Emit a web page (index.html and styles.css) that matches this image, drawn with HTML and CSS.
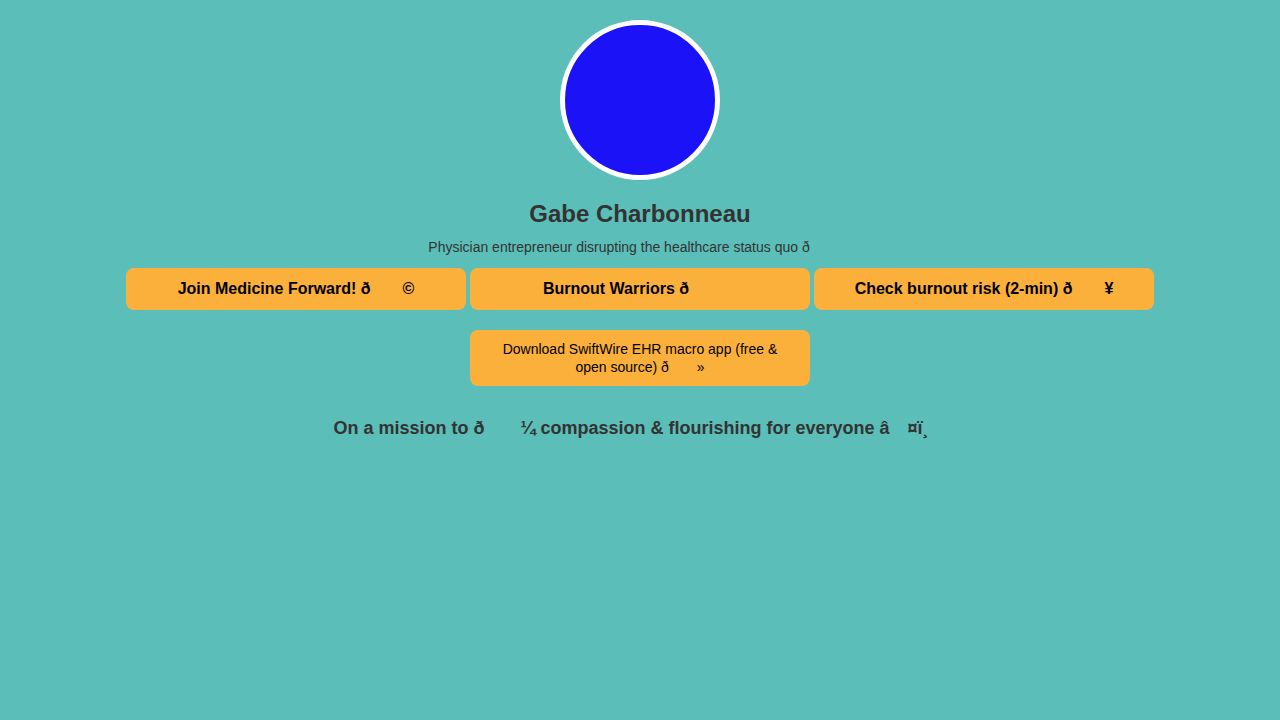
FILE: index.html
```html
<!DOCTYPE html>
<html lang="en">
<head>
<meta charset="utf-8">
<title>Gabe Charbonneau</title>
<link rel="stylesheet" href="styles.css">
</head>
<body>
<main class="page">
  <div class="avatar"></div>
  <h1 class="name">Gabe Charbonneau</h1>
  <p class="bio">Physician entrepreneur disrupting the healthcare status quo ð<span class="cc cc3"></span></p>
  <nav class="links">
    <a class="link link-bold" href="#">Join Medicine Forward! ð<span class="cc cc2"></span>©</a>
    <a class="link link-bold" href="#">Burnout Warriors ð<span class="cc cc3"></span></a>
    <a class="link link-bold" href="#">Check burnout risk (2-min) ð<span class="cc cc2"></span>¥</a>
    <a class="link link-plain" href="#">Download SwiftWire EHR macro app (free &amp; open source) ð<span class="cc cc2"></span>»</a>
  </nav>
  <h2 class="mission">On a mission to ð<span class="cc cc2"></span>¼ compassion &amp; flourishing for everyone â<span class="cc cc1"></span>¤ï¸<span class="cc cc1"></span></h2>
</main>
</body>
</html>
```

FILE: styles.css
```css
html, body {
  margin: 0;
  padding: 0;
}

body {
  background: #5bbeb8;
  font-family: "Liberation Sans", Arial, Helvetica, sans-serif;
  color: #333333;
}

.page {
  display: flex;
  flex-direction: column;
  align-items: center;
  padding-top: 20px;
}

.avatar {
  width: 150px;
  height: 150px;
  border-radius: 50%;
  border: 5px solid #ffffff;
  background: #1c12f8;
}

.name {
  margin: 20px 0 0;
  font-size: 24px;
  font-weight: bold;
  line-height: 28px;
}

.bio {
  margin: 11px 0 0;
  font-size: 14px;
  line-height: 16px;
}

/* mis-decoded emoji bytes (C1 control characters), each shown as a 1em blank */
.cc {
  display: inline-block;
  height: 1em;
  line-height: 1;
  vertical-align: top;
  white-space: nowrap;
  overflow: hidden;
}
.cc1 { width: 1em; }
.cc2 { width: 2em; }
.cc3 { width: 3em; }
.cc1::before { content: "\9f"; }
.cc2::before { content: "\9f\9a"; }
.cc3::before { content: "\9f\9a\80"; }

.links {
  display: flex;
  flex-wrap: wrap;
  justify-content: center;
  width: 1040px;
  margin-top: 3px;
}

.link {
  box-sizing: border-box;
  width: 340px;
  margin: 10px 2px;
  border-radius: 8px;
  background: #fcb03c;
  color: #000000;
  text-decoration: none;
  text-align: center;
}

.link-bold {
  padding: 10px 20px;
  font-size: 16px;
  font-weight: bold;
  line-height: 22px;
}

.link-plain {
  padding: 10px 30px;
  font-size: 14px;
  line-height: 18px;
}

.mission {
  margin: 21px 0 0;
  font-size: 18px;
  font-weight: bold;
  line-height: 22px;
}
```
